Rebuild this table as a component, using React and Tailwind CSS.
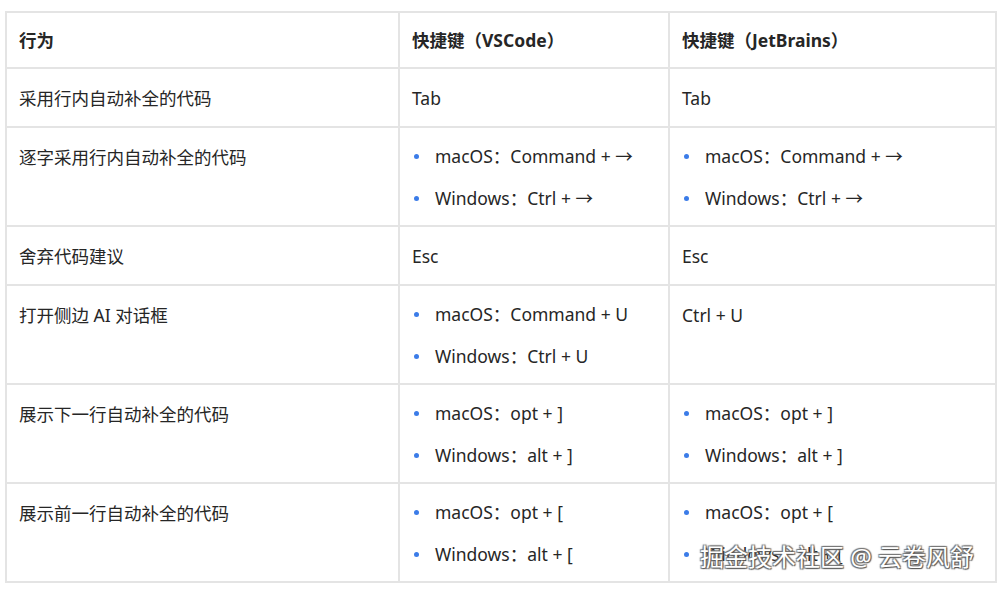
const ROWS = [
  { action: '采用行内自动补全的代码', vs: 'Tab', jb: 'Tab' },
  {
    action: '逐字采用行内自动补全的代码',
    vs: ['macOS：Command + →', 'Windows：Ctrl + →'],
    jb: ['macOS：Command + →', 'Windows：Ctrl + →'],
  },
  { action: '舍弃代码建议', vs: 'Esc', jb: 'Esc' },
  { action: '打开侧边 AI 对话框', vs: ['macOS：Command + U', 'Windows：Ctrl + U'], jb: 'Ctrl + U' },
  {
    action: '展示下一行自动补全的代码',
    vs: ['macOS：opt + ]', 'Windows：alt + ]'],
    jb: ['macOS：opt + ]', 'Windows：alt + ]'],
  },
  {
    action: '展示前一行自动补全的代码',
    vs: ['macOS：opt + [', 'Windows：alt + ['],
    jb: ['macOS：opt + [', 'Windows：alt + ['],
  },
];

function Cell({ value }) {
  if (Array.isArray(value)) {
    return (
      <ul className="-mt-px space-y-[18px]">
        {value.map((v) => (
          <li key={v} className="flex items-center">
            <span className="ml-[2px] mr-[16px] h-[5px] w-[5px] rounded-full bg-[#3b7ce8]" />
            {v}
          </li>
        ))}
      </ul>
    );
  }
  return value;
}

export default function App() {
  return (
    <div
      className="relative h-[592px] w-[1004px] bg-white pl-[5px] pt-[11px] text-[17.5px] leading-[24px] text-[#262626]"
      style={{ fontFamily: '"Noto Sans", "Noto Sans CJK SC", sans-serif' }}
    >
      <table className="w-[990px] table-fixed border-collapse">
        <colgroup>
          <col className="w-[393px]" />
          <col className="w-[270px]" />
          <col className="w-[327px]" />
        </colgroup>
        <thead>
          <tr className="h-[56px]">
            {['行为', '快捷键（VSCode）', '快捷键（JetBrains）'].map((h) => (
              <th key={h} className="border-2 border-[#e4e4e4] px-3 text-left align-middle font-bold">
                {h}
              </th>
            ))}
          </tr>
        </thead>
        <tbody>
          {ROWS.map((r) => (
            <tr key={r.action}>
              <td className="border-2 border-[#e4e4e4] px-3 pb-[16px] pt-[17px] align-top">{r.action}</td>
              <td className="border-2 border-[#e4e4e4] px-3 pb-[15px] pt-[17px] align-top">
                <Cell value={r.vs} />
              </td>
              <td className="border-2 border-[#e4e4e4] px-3 pb-[15px] pt-[17px] align-top">
                <Cell value={r.jb} />
              </td>
            </tr>
          ))}
        </tbody>
      </table>
      <div className="absolute left-[700px] top-[541px] text-[24px] leading-[32px] text-white [text-shadow:1px_1px_1px_#555,-1px_-1px_1px_#777,1px_-1px_1px_#777,-1px_1px_1px_#777]">
        掘金技术社区 @ 云卷风舒
      </div>
    </div>
  );
}
